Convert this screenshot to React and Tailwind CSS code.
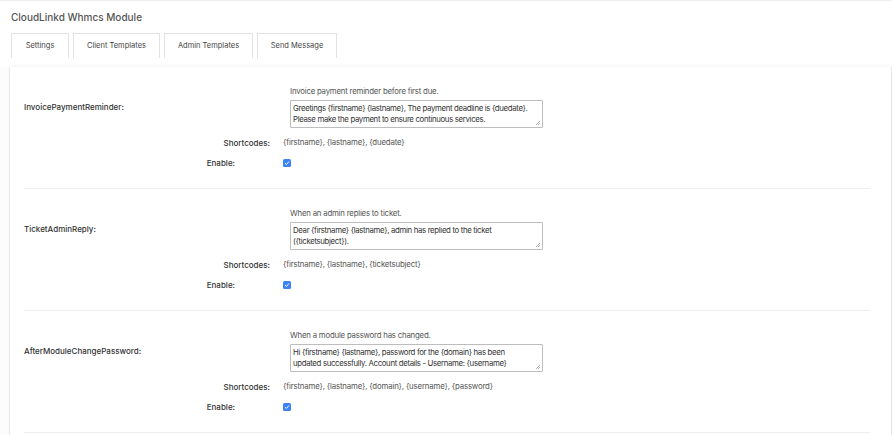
import React from 'react';

const templates = [
  {
    name: 'InvoicePaymentReminder',
    description: 'Invoice payment reminder before first due.',
    message: [
      'Greetings {firstname} {lastname}, The payment deadline is {duedate}.',
      'Please make the payment to ensure continuous services.',
    ],
    shortcodes: '{firstname}, {lastname}, {duedate}',
  },
  {
    name: 'TicketAdminReply',
    description: 'When an admin replies to ticket.',
    message: ['Dear {firstname} {lastname}, admin has replied to the ticket', '({ticketsubject}).'],
    shortcodes: '{firstname}, {lastname}, {ticketsubject}',
  },
  {
    name: 'AfterModuleChangePassword',
    description: 'When a module password has changed.',
    message: [
      'Hi {firstname} {lastname}, password for the {domain} has been',
      'updated successfully. Account details - Username: {username}',
    ],
    shortcodes: '{firstname}, {lastname}, {domain}, {username}, {password}',
  },
];

const tabs = [
  { label: 'Settings', width: 'w-[58px]' },
  { label: 'Client Templates', width: 'w-[87px]' },
  { label: 'Admin Templates', width: 'w-[89px]' },
  { label: 'Send Message', width: 'w-[80px]' },
];

const TemplateRow = ({ template }) => (
  <div className="pt-[18px] pb-[19px] border-b border-[#eeeeee]">
    {/* Label + description/textarea */}
    <div className="flex items-center">
      <div className="w-[259px] shrink-0 text-[8px] font-medium text-[#333]">
        {template.name}:
      </div>
      <div className="pl-[7px]">
        <div className="h-[12px] leading-[12px] text-[7.8px] tracking-[-0.2px] text-[#555]">
          {template.description}
        </div>
        <div className="mt-[3px] relative w-[253px] h-[28px] border border-[#bdbdbd] rounded-[1px] bg-white overflow-hidden">
          <div className="px-[2px] pt-[2px] text-[7.8px] tracking-[-0.33px] leading-[11px] text-[#333]">
            {template.message.map((line) => (
              <div key={line} className="whitespace-nowrap">
                {line}
              </div>
            ))}
          </div>
          <svg className="absolute right-[1px] bottom-[1px]" width="6" height="6" viewBox="0 0 6 6">
            <path d="M5 1 L1 5 M5 3 L3 5" stroke="#999" strokeWidth="0.8" />
          </svg>
        </div>
      </div>
    </div>

    {/* Shortcodes */}
    <div className="mt-[9px] h-[12px] flex items-center">
      <div className="w-[246px] shrink-0 text-right text-[8px] font-medium text-[#333]">Shortcodes:</div>
      <div className="ml-[13px] text-[7.8px] tracking-[-0.15px] text-[#555]">{template.shortcodes}</div>
    </div>

    {/* Enable */}
    <div className="mt-[8px] h-[12px] flex items-center">
      <div className="w-[211px] shrink-0 text-right text-[8px] font-medium text-[#333]">Enable:</div>
      <div className="ml-[48px] flex items-center">
        <span className="w-[8px] h-[8px] rounded-[1.5px] bg-[#3b82f6] flex items-center justify-center">
          <svg width="6" height="6" viewBox="0 0 6 6">
            <path d="M1 3.2 L2.4 4.5 L5 1.5" stroke="white" strokeWidth="1" fill="none" />
          </svg>
        </span>
      </div>
    </div>
  </div>
);

export default function App() {
  return (
    <div
      className="w-[892px] h-[435px] overflow-hidden bg-white border-t border-[#eeeeee]"
      style={{ fontFamily: 'Inter, "Noto Sans", sans-serif' }}
    >
      {/* Title */}
      <div className="pl-[11px] pt-[9px] h-[32px] text-[10px] font-medium text-[#555]">
        CloudLinkd Whmcs Module
      </div>

      {/* Tabs */}
      <div className="flex gap-[4px] pl-[11px]">
        {tabs.map((tab) => (
          <div
            key={tab.label}
            className={`${tab.width} h-[25px] flex items-center justify-center border border-b-0 border-[#e2e2e2] text-[7.5px] text-[#444] bg-white`}
          >
            {tab.label}
          </div>
        ))}
      </div>

      {/* Panel */}
      <div className="flex mt-[9px]">
        <div className="w-[10px] shrink-0 border-r border-[#f0f0f0] bg-[#fcfcfc]" />
        <div className="flex-1 h-[400px] bg-white pl-[14px] pr-[21px] border-r border-[#e6e6e6] shadow-[0_-1px_4px_rgba(0,0,0,0.05)]">
          {templates.map((t) => (
            <TemplateRow key={t.name} template={t} />
          ))}
        </div>
      </div>
    </div>
  );
}
